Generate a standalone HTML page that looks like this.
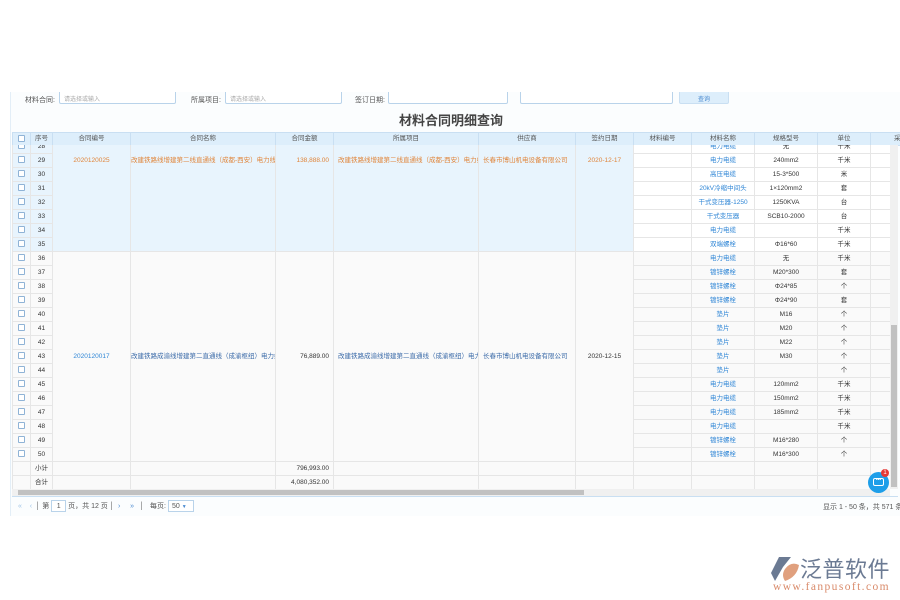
<!DOCTYPE html>
<html><head><meta charset="utf-8"><style>
*{margin:0;padding:0;box-sizing:border-box}
body{width:900px;height:600px;background:#fff;font-family:"Liberation Sans","Noto Sans CJK SC",sans-serif;font-size:7px;color:#333;position:relative;overflow:hidden}
.page{position:absolute;left:10px;top:92px;width:890px;height:424px;background:#fbfdfe;border-left:1px solid #e3eef7;overflow:hidden}
.lbl{position:absolute;top:3px;font-size:7px;color:#555}
.inp{position:absolute;top:-4px;height:16px;border:1px solid #b9d3ea;background:#fff;border-radius:2px;font-size:6px;color:#aaa;padding:5px 4px 0}
.title{position:absolute;left:0;width:880px;top:18px;text-align:center;font-size:13px;font-weight:bold;color:#444}
table{border-collapse:collapse;table-layout:fixed;position:absolute}
td,th{height:14px;border:1px solid #e6e6e6;text-align:center;white-space:nowrap;overflow:hidden;font-size:6.5px;font-weight:normal;line-height:12px}
th{background:#ddeefb;color:#555;border-color:#c9dff2;height:13px}
.cb{display:inline-block;width:7px;height:7px;border:1px solid #8fb3d6;border-radius:1px;vertical-align:middle;background:#fff}
.b1 td.g{background:#e8f4fd}
.b1 td.m{background:#fff}
.or{color:#e0853a}
.bl{color:#2f86d6}
.dk{color:#3a6aa8}
.r{text-align:right;padding-right:4px}
.l{text-align:left;padding-left:4px}
</style></head><body>
<div class="page">
<div class="lbl" style="left:14px">材料合同:</div>
<div class="inp" style="left:48px;width:117px">请选择或输入</div>
<div class="lbl" style="left:180px">所属项目:</div>
<div class="inp" style="left:214px;width:117px">请选择或输入</div>
<div class="lbl" style="left:344px">签订日期:</div>
<div class="inp" style="left:377px;width:120px"></div>
<div class="inp" style="left:509px;width:153px"></div>
<div class="inp" style="left:668px;width:50px;background:#ddeefb;border-color:#c9dff2;color:#4a8ad0;text-align:center">查询</div>
<div class="title">材料合同明细查询</div>
</div>

<table style="left:12px;top:132px;width:918px">
<colgroup><col style="width:18px"><col style="width:22px"><col style="width:78px"><col style="width:145px"><col style="width:58px"><col style="width:145px"><col style="width:97px"><col style="width:58px"><col style="width:58px"><col style="width:63px"><col style="width:63px"><col style="width:53px"><col style="width:60px"></colgroup>
<tr><th><span class="cb"></span></th><th>序号</th><th>合同编号</th><th>合同名称</th><th>合同金额</th><th>所属项目</th><th>供应商</th><th>签约日期</th><th>材料编号</th><th>材料名称</th><th>规格型号</th><th>单位</th><th>采购</th></tr>
</table>

<div style="position:absolute;left:12px;top:145px;width:878px;height:344px;overflow:hidden">
<table style="left:0;top:-6px;width:918px;background:#fafafa">
<colgroup><col style="width:18px"><col style="width:22px"><col style="width:78px"><col style="width:145px"><col style="width:58px"><col style="width:145px"><col style="width:97px"><col style="width:58px"><col style="width:58px"><col style="width:63px"><col style="width:63px"><col style="width:53px"><col style="width:60px"></colgroup>
<tr class="b1"><td class="g"><span class="cb"></span></td><td class="g">28</td>
<td class="g or" rowspan="8" style="vertical-align:top;padding-top:15px">2020120025</td>
<td class="g or" rowspan="8" style="vertical-align:top;padding-top:15px">改建铁路线增建第二线直通线（成都-西安）电力线</td>
<td class="g or r" rowspan="8" style="vertical-align:top;padding-top:15px">138,888.00</td>
<td class="g or l" rowspan="8" style="vertical-align:top;padding-top:15px">改建铁路线增建第二线直通线（成都-西安）电力线</td>
<td class="g or l" rowspan="8" style="vertical-align:top;padding-top:15px">长春市博山机电设备有限公司</td>
<td class="g or" rowspan="8" style="vertical-align:top;padding-top:15px">2020-12-17</td>
<td class="m"></td><td class="m bl">电力电缆</td><td class="m">无</td><td class="m">千米</td><td class="m"></td></tr>
<tr class="b1"><td class="g"><span class="cb"></span></td><td class="g">29</td><td class="m"></td><td class="m bl">电力电缆</td><td class="m">240mm2</td><td class="m">千米</td><td class="m"></td></tr>
<tr class="b1"><td class="g"><span class="cb"></span></td><td class="g">30</td><td class="m"></td><td class="m bl">高压电缆</td><td class="m">15-3*500</td><td class="m">米</td><td class="m"></td></tr>
<tr class="b1"><td class="g"><span class="cb"></span></td><td class="g">31</td><td class="m"></td><td class="m bl">20kV冷缩中间头</td><td class="m">1×120mm2</td><td class="m">套</td><td class="m"></td></tr>
<tr class="b1"><td class="g"><span class="cb"></span></td><td class="g">32</td><td class="m"></td><td class="m bl">干式变压器-1250</td><td class="m">1250KVA</td><td class="m">台</td><td class="m"></td></tr>
<tr class="b1"><td class="g"><span class="cb"></span></td><td class="g">33</td><td class="m"></td><td class="m bl">干式变压器</td><td class="m">SCB10-2000</td><td class="m">台</td><td class="m"></td></tr>
<tr class="b1"><td class="g"><span class="cb"></span></td><td class="g">34</td><td class="m"></td><td class="m bl">电力电缆</td><td class="m"></td><td class="m">千米</td><td class="m"></td></tr>
<tr class="b1"><td class="g"><span class="cb"></span></td><td class="g">35</td><td class="m"></td><td class="m bl">双端螺栓</td><td class="m">Φ16*60</td><td class="m">千米</td><td class="m"></td></tr>
<tr><td><span class="cb"></span></td><td>36</td>
<td class="bl" rowspan="15">2020120017</td>
<td class="dk" rowspan="15">改建铁路成渝线增建第二直通线（成渝枢纽）电力线</td>
<td class="r" rowspan="15">76,889.00</td>
<td class="dk l" rowspan="15">改建铁路成渝线增建第二直通线（成渝枢纽）电力线</td>
<td class="dk l" rowspan="15">长春市博山机电设备有限公司</td>
<td rowspan="15">2020-12-15</td>
<td></td><td class="bl">电力电缆</td><td>无</td><td>千米</td><td></td></tr>
<tr><td><span class="cb"></span></td><td>37</td><td></td><td class="bl">镀锌螺栓</td><td>M20*300</td><td>套</td><td></td></tr>
<tr><td><span class="cb"></span></td><td>38</td><td></td><td class="bl">镀锌螺栓</td><td>Φ24*85</td><td>个</td><td></td></tr>
<tr><td><span class="cb"></span></td><td>39</td><td></td><td class="bl">镀锌螺栓</td><td>Φ24*90</td><td>套</td><td></td></tr>
<tr><td><span class="cb"></span></td><td>40</td><td></td><td class="bl">垫片</td><td>M16</td><td>个</td><td></td></tr>
<tr><td><span class="cb"></span></td><td>41</td><td></td><td class="bl">垫片</td><td>M20</td><td>个</td><td></td></tr>
<tr><td><span class="cb"></span></td><td>42</td><td></td><td class="bl">垫片</td><td>M22</td><td>个</td><td></td></tr>
<tr><td><span class="cb"></span></td><td>43</td><td></td><td class="bl">垫片</td><td>M30</td><td>个</td><td></td></tr>
<tr><td><span class="cb"></span></td><td>44</td><td></td><td class="bl">垫片</td><td></td><td>个</td><td></td></tr>
<tr><td><span class="cb"></span></td><td>45</td><td></td><td class="bl">电力电缆</td><td>120mm2</td><td>千米</td><td></td></tr>
<tr><td><span class="cb"></span></td><td>46</td><td></td><td class="bl">电力电缆</td><td>150mm2</td><td>千米</td><td></td></tr>
<tr><td><span class="cb"></span></td><td>47</td><td></td><td class="bl">电力电缆</td><td>185mm2</td><td>千米</td><td></td></tr>
<tr><td><span class="cb"></span></td><td>48</td><td></td><td class="bl">电力电缆</td><td></td><td>千米</td><td></td></tr>
<tr><td><span class="cb"></span></td><td>49</td><td></td><td class="bl">镀锌螺栓</td><td>M16*280</td><td>个</td><td></td></tr>
<tr><td><span class="cb"></span></td><td>50</td><td></td><td class="bl">镀锌螺栓</td><td>M16*300</td><td>个</td><td></td></tr>
<tr><td></td><td>小计</td><td></td><td></td><td class="r">796,993.00</td><td></td><td></td><td></td><td></td><td></td><td></td><td></td><td></td></tr>
<tr><td></td><td>合计</td><td></td><td></td><td class="r">4,080,352.00</td><td></td><td></td><td></td><td></td><td></td><td></td><td></td><td></td></tr>
</table>
</div>
<div style="position:absolute;left:890px;top:145px;width:8px;height:344px;background:#f0f0f0"></div>
<div style="position:absolute;left:891px;top:325px;width:6px;height:162px;background:#c1c1c1"></div>
<div style="position:absolute;left:12px;top:489px;width:878px;height:7px;background:#f0f0f0"></div>
<div style="position:absolute;left:18px;top:490px;width:566px;height:5px;background:#c1c1c1"></div>
<div style="position:absolute;left:12px;top:496px;width:886px;height:1px;background:#c9dff2"></div>
<div style="position:absolute;left:18px;top:500px;font-size:7px;color:#555;line-height:12px;white-space:nowrap">
<span style="color:#9ec3e6">«</span>&nbsp;&nbsp;&nbsp;&nbsp;<span style="color:#9ec3e6">‹</span>&nbsp;&nbsp;│ 第 <span style="display:inline-block;width:15px;height:12px;border:1px solid #b9d3ea;text-align:center;background:#fff">1</span> 页，共 12 页 │&nbsp;&nbsp;<span style="color:#4a8ad0">›</span>&nbsp;&nbsp;&nbsp;&nbsp;&nbsp;<span style="color:#4a8ad0">»</span>&nbsp;&nbsp;&nbsp;│&nbsp;&nbsp;&nbsp;每页: <span style="display:inline-block;width:26px;height:12px;border:1px solid #b9d3ea;background:#fff;padding-left:3px">50 <span style="color:#4a8ad0;font-size:5px">▼</span></span>
</div>
<div style="position:absolute;left:823px;top:502px;font-size:7px;color:#555;white-space:nowrap">显示 1 - 50 条，共 571 条</div>
<div style="position:absolute;left:868px;top:472px;width:21px;height:21px;border-radius:50%;background:#1d9ee9"></div>
<div style="position:absolute;left:873px;top:478px;width:11px;height:8px;border:1.5px solid #fff;border-radius:2px;color:#fff;font-size:5px;line-height:3px;text-align:center">•••</div>
<div style="position:absolute;left:881px;top:469px;width:8px;height:8px;border-radius:50%;background:#e53935;color:#fff;font-size:6px;line-height:8px;text-align:center">1</div>
<svg style="position:absolute;left:769px;top:555px" width="32" height="28" viewBox="0 0 32 28">
<path d="M10 2 L22 2 L14 12 L6 26 L2 18 Z" fill="#6b7a93"/>
<path d="M16 14 Q22 6 30 10 Q28 22 16 26 Q12 20 16 14 Z" fill="#e0a07e"/>
</svg>
<div style="position:absolute;left:800px;top:553px;font-size:22px;color:#6b7a93;line-height:30px;font-family:'Noto Sans CJK SC',sans-serif;letter-spacing:0.5px">泛普软件</div>
<div style="position:absolute;left:773px;top:581px;font-size:11.5px;color:#d98a6a;font-family:'Liberation Serif',serif;letter-spacing:1.4px">www.fanpusoft.com</div>
</body></html>
